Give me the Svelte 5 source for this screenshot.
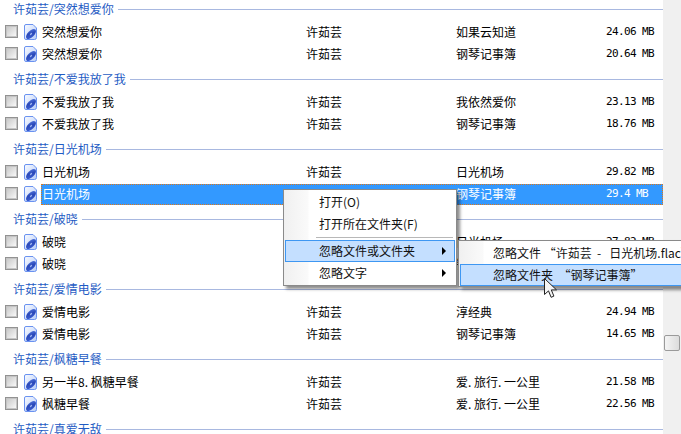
<script>
  const artist = '许茹芸';
  const groups = [
    { name: '突然想爱你', rows: [['突然想爱你', '如果云知道', '24.06 MB'], ['突然想爱你', '钢琴记事簿', '20.64 MB']] },
    { name: '不爱我放了我', rows: [['不爱我放了我', '我依然爱你', '23.13 MB'], ['不爱我放了我', '钢琴记事簿', '18.76 MB']] },
    { name: '日光机场', rows: [['日光机场', '日光机场', '29.82 MB'], ['日光机场', '钢琴记事簿', '29.4 MB', true]] },
    { name: '破晓', rows: [['破晓', '日光机场', '27.82 MB'], ['破晓', '钢琴记事簿', '20.31 MB']] },
    { name: '爱情电影', rows: [['爱情电影', '淳经典', '24.94 MB'], ['爱情电影', '钢琴记事簿', '14.65 MB']] },
    { name: '枫糖早餐', rows: [['另一半8. 枫糖早餐', '爱. 旅行. 一公里', '21.58 MB'], ['枫糖早餐', '爱. 旅行. 一公里', '22.56 MB']] },
    { name: '真爱无敌', rows: [] }
  ];
</script>

<div class="screen">
  <div class="list">
    {#each groups as g}
      <div class="head"><span>{artist}/{g.name}</span><i></i></div>
      {#each g.rows as r}
        <div class="row">
          <span class="check"></span>
          <svg class="file" width="13" height="16" viewBox="0 0 13 16">
            <defs>
              <linearGradient id="fg" x1="0" y1="0" x2="1" y2="1">
                <stop offset="0" stop-color="#f8faff" />
                <stop offset="1" stop-color="#b8cdf7" />
              </linearGradient>
              <linearGradient id="dg" x1="0" y1="1" x2="1" y2="0">
                <stop offset="0" stop-color="#3f63d8" />
                <stop offset="0.55" stop-color="#2a48b8" />
                <stop offset="1" stop-color="#5a80e6" />
              </linearGradient>
            </defs>
            <path d="M2 .5h7l3.500 3.500v9.500a2 2 0 0 1-2 2h-8.500a1.500 1.500 0 0 1-1.500-1.500v-12a1.500 1.500 0 0 1 1.500-1.500z" fill="url(#fg)" stroke="#6a92f0" />
            <ellipse cx="7" cy="10" rx="6.200" ry="3.200" transform="rotate(-45 7 10)" fill="url(#dg)" />
            <ellipse cx="7" cy="10" rx="1.400" ry="0.800" transform="rotate(-45 7 10)" fill="#9db4f0" />
          </svg>
          <div class="cells" class:selected={r[3]}>
            <span class="title">{r[0]}</span>
            <span class="artist">{artist}</span>
            <span class="album">{r[1]}</span>
            <span class="size">{r[2]}</span>
          </div>
        </div>
      {/each}
    {/each}
  </div>

  <div class="scrollbar"><div class="thumb"></div></div>

  <div class="menu main">
    <div class="item">打开(O)</div>
    <div class="item">打开所在文件夹(F)</div>
    <div class="sep"></div>
    <div class="item on">忽略文件或文件夹<b></b></div>
    <div class="item">忽略文字<b></b></div>
  </div>

  <div class="menu sub">
    <div class="item">忽略文件 “许茹芸  -   日光机场.flac”</div>
    <div class="item on">忽略文件夹  “钢琴记事簿”</div>
  </div>

  <svg class="cursor" width="14" height="21" viewBox="0 0 14 21">
    <path d="M.5.5v16l4-3.600 2.600 6.400 2.800-1.200-2.600-6.200h5.200z" fill="#f4f4f4" stroke="#222" stroke-width="1" />
  </svg>
</div>

<style>
  :global(body) { margin: 0; background: #fff; }
  .screen {
    position: relative;
    width: 681px;
    height: 434px;
    overflow: hidden;
    background: #fff;
    font: 12px/22px "Noto Sans CJK SC", "Liberation Sans", sans-serif;
    color: #000;
    display: flex;
  }
  .list { width: 663px; margin-top: -4px; flex: none; }
  .head {
    height: 26px;
    display: flex;
    align-items: center;
    gap: 4px;
    padding-left: 13px;
    color: #1f5cc4;
  }
  .head i { flex: 1; height: 1px; background: #a8b8e0; }
  .row { height: 22px; display: flex; align-items: flex-start; }
  .check {
    width: 11px;
    height: 11px;
    margin: 3px 0 0 5px;
    border: 1px solid #929292;
    box-shadow: inset 0 0 0 1px #c4c4c4;
    background: linear-gradient(135deg, #c4c4c4, #fdfdfd);
  }
  .file { margin: 2px 0 0 6px; flex: none; }
  .cells {
    margin-left: 4px;
    width: 622px;
    height: 21px;
    line-height: 19px;
    padding-bottom: 2px;
    box-sizing: border-box;
    display: flex;
    align-items: center;
    border: 1px solid transparent;
  }
  .cells.selected {
    background: #3399ff;
    color: #fff;
    border: 1px dotted #e07818;
  }
  .selected .artist { visibility: hidden; }
  .title { width: 264px; }
  .artist { width: 150px; }
  .album { width: 150px; }
  .size { font: 11px "DejaVu Sans Mono", monospace; letter-spacing: -0.62px; white-space: pre; }
  .scrollbar { flex: 1; background: #f0f0f0; position: relative; }
  .thumb {
    position: absolute;
    left: 1px;
    top: 335px;
    width: 14px;
    height: 14px;
    border: 1px solid #9a9a9a;
    border-radius: 2px;
    background: linear-gradient(90deg, #f4f4f4, #dcdcdc);
  }
  .menu {
    position: absolute;
    box-sizing: border-box;
    background: linear-gradient(90deg, #f0f0f0, #fafafa 24px, #fff 25px);
    border: 1px solid #8a8a8a;
    box-shadow: 3px 3px 3px rgba(0, 0, 0, 0.45);
  }
  .main { left: 283px; top: 189px; width: 174px; height: 97px; padding: 1px; }
  .sub { left: 458px; top: 240px; width: 240px; height: 47px; padding: 1px; }
  .item {
    height: 22px;
    line-height: 20px;
    box-sizing: border-box;
    padding-left: 33px;
    border: 1px solid transparent;
    position: relative;
    white-space: pre;
    color: #111;
  }
  .sub .item { padding-left: 32px; }
  .item.on { background: #c4dfff; border-color: #3e97f2; }
  .item b {
    position: absolute;
    right: 8px;
    top: 6px;
    border-left: 4px solid #000;
    border-top: 4px solid transparent;
    border-bottom: 4px solid transparent;
  }
  .sep { height: 1px; background: #b8b8b8; margin: 2px 2px 2px 31px; }
  .cursor { position: absolute; left: 544px; top: 278px; }
</style>
